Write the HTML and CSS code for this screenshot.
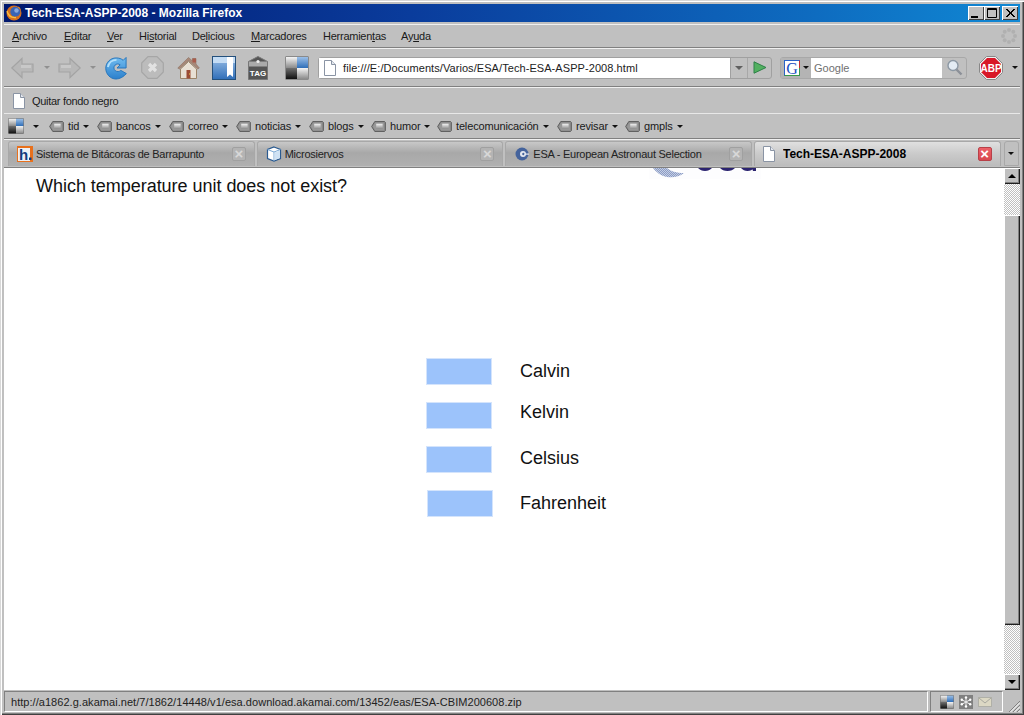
FILE: index.html
```html
<!DOCTYPE html>
<html lang="es">
<head>
<meta charset="utf-8">
<title>Tech-ESA-ASPP-2008 - Mozilla Firefox</title>
<link rel="stylesheet" href="styles.css">
</head>
<body>
<svg class="defs" width="0" height="0" aria-hidden="true">
  <defs>
    <linearGradient id="dg" x1="0" y1="0" x2="0" y2="1"><stop offset="0" stop-color="#f4f4f4"/><stop offset="1" stop-color="#8a8a8a"/></linearGradient>
    <linearGradient id="dk" x1="0" y1="0" x2="0" y2="1"><stop offset="0" stop-color="#707070"/><stop offset="1" stop-color="#101010"/></linearGradient>
    <linearGradient id="bl" x1="0" y1="0" x2="0" y2="1"><stop offset="0" stop-color="#9cc0e8"/><stop offset="1" stop-color="#2f6eb8"/></linearGradient>
    <linearGradient id="rl" x1="0" y1="0" x2="0" y2="1"><stop offset="0" stop-color="#70bcf0"/><stop offset="1" stop-color="#2c80cc"/></linearGradient>
    <linearGradient id="tag" x1="0" y1="0" x2="0" y2="1"><stop offset="0" stop-color="#f4f4f4"/><stop offset="1" stop-color="#8c8c8c"/></linearGradient>
    <symbol id="delicious" viewBox="0 0 24 24">
      <rect x="0.5" y="0.5" width="23" height="23" fill="#555"/>
      <rect x="1" y="1" width="11" height="11" fill="url(#dg)"/>
      <rect x="12" y="1" width="11" height="11" fill="url(#bl)"/>
      <rect x="1" y="12" width="11" height="11" fill="url(#dk)"/>
      <rect x="12" y="12" width="11" height="11" fill="url(#dg)"/>
    </symbol>
    <symbol id="page" viewBox="0 0 12 16">
      <path d="M.5.5h7l4 4v11H.5z" fill="#fff" stroke="#8a94a4"/>
      <path d="M7.5.5v4h4" fill="#e4e8ee" stroke="#8a94a4"/>
    </symbol>
    <symbol id="tagicon" viewBox="0 0 16 12">
      <path d="M4 .5h10.500l1 1v9l-1 1H4L.5 6z" fill="#8c8c8c" stroke="#585858"/>
      <path d="M4.500 2h9.500v8H4.500L2 6z" fill="#989898"/>
      <rect x="5.500" y="3" width="7" height="5.500" fill="url(#tag)"/>
    </symbol>
  </defs>
</svg>
<div class="window">
  <header class="titlebar">
    <svg class="t-icon" width="16" height="16" viewBox="0 0 16 16" aria-hidden="true">
      <circle cx="8" cy="8" r="7.500" fill="#d8701c"/>
      <circle cx="9.300" cy="6.800" r="5" fill="#3a64b4"/>
      <circle cx="10.500" cy="5.500" r="2.200" fill="#88a8dc"/>
      <path d="M1 6c1 4 4 7 9 6.500" fill="none" stroke="#f8c040" stroke-width="1.300"/>
      <path d="M12.500 1.500c1.500 1 2.300 2.500 2.500 4-1-1.500-2-2.500-3.500-3z" fill="#e88a24"/>
    </svg>
    <span class="t-text">Tech-ESA-ASPP-2008 - Mozilla Firefox</span>
    <div class="t-btns">
      <span class="t-btn"><svg width="16" height="14" viewBox="0 0 16 14" aria-hidden="true"><rect x="3" y="10" width="7" height="2" fill="#000"/></svg></span>
      <span class="t-btn"><svg width="16" height="14" viewBox="0 0 16 14" aria-hidden="true"><path d="M3.500 2.500h9v9h-9z M3 3.500h10" fill="none" stroke="#000"/></svg></span>
      <span class="t-btn t-close"><svg width="16" height="14" viewBox="0 0 16 14" aria-hidden="true"><path d="M4 3l8 8M5 3l8 8M12 3l-8 8M13 3l-8 8" stroke="#000"/></svg></span>
    </div>
  </header>

  <nav class="menubar">
    <span><u>A</u>rchivo</span>
    <span><u>E</u>ditar</span>
    <span><u>V</u>er</span>
    <span>Hi<u>s</u>torial</span>
    <span>De<u>l</u>icious</span>
    <span><u>M</u>arcadores</span>
    <span>Herramien<u>t</u>as</span>
    <span>Ay<u>u</u>da</span>
    <svg class="throbber" width="16" height="16" viewBox="0 0 16 16" aria-hidden="true">
      <g fill="#b0b0b0"><circle cx="8" cy="2" r="2"/><circle cx="8" cy="14" r="2"/><circle cx="2" cy="8" r="2"/><circle cx="14" cy="8" r="2"/><circle cx="3.700" cy="3.700" r="2"/><circle cx="12.300" cy="3.700" r="2"/><circle cx="3.700" cy="12.300" r="2"/><circle cx="12.300" cy="12.300" r="2"/></g>
    </svg>
  </nav>

  <div class="navbar">
    <svg class="i-back" width="23" height="22" viewBox="0 0 23 22" aria-hidden="true"><path d="M.8 11 11 1.500v5.500h11v8H11v5.500z" fill="#b8b8b8" stroke="#a4a4a4" stroke-width="1.200"/><path d="M10 11V8h10v3z" fill="#c8c8c8"/></svg>
    <span class="drop d-back"></span>
    <svg class="i-fwd" width="23" height="22" viewBox="0 0 23 22" aria-hidden="true"><path d="M22.200 11 12 1.500v5.500H1v8h11v5.500z" fill="#b8b8b8" stroke="#a4a4a4" stroke-width="1.200"/><path d="M13 11V8H3v3z" fill="#c8c8c8"/></svg>
    <span class="drop d-fwd"></span>
    <svg class="i-reload" width="23" height="24" viewBox="0 0 24 24" aria-hidden="true"><path d="M22 1v11h-9.500l3.300-3.300c-1.500-1.300-4-1.200-5.300.3-1.700 1.700-1.600 4.300.2 5.800 1.800 1.500 4.300 1.200 5.800-.3l5.800 3.300C19.600 21 15.600 23.500 11.500 23.500 5.500 23.500.8 18.300.8 12.300S5.600 1.500 11.600 1.500c3 0 5.500.8 7.400 2.500z" fill="url(#rl)" stroke="#2474bc"/><path d="M3 11c1-5 5-7.500 9-7.500" stroke="#b4e0fa" stroke-width="2" fill="none"/></svg>
    <svg class="i-stop" width="23" height="23" viewBox="0 0 23 23" aria-hidden="true"><path d="M7 .7h9l6.300 6.300v9L16 22.300H7L.7 16V7z" fill="#bcbcbc" stroke="#a6a6a6" stroke-width="1.200"/><path d="M8 8l7 7M15 8l-7 7" stroke="#e2e2e2" stroke-width="3.200"/></svg>
    <svg class="i-home" width="23" height="23" viewBox="0 0 23 23" aria-hidden="true"><path d="M.8 12 11.500 1.500l4 3.500V2.500h3.500V8l3.300 4-1.500 1-9.300-8.500L2.500 13z" fill="#a88878" stroke="#8c7060" stroke-width=".6"/><rect x="15.500" y="2.500" width="3.500" height="4" fill="#a85c4c"/><path d="M3.500 13 11.500 5.500l8 7.500v9.500h-16z" fill="#e8e0d4" stroke="#9c8468"/><rect x="9.500" y="14" width="4" height="8.500" fill="#9c4c34"/><rect x="12" y="17.500" width="1" height="1" fill="#f0d050"/></svg>
    <svg class="i-book" width="24" height="24" viewBox="0 0 24 24" aria-hidden="true"><rect x=".5" y=".5" width="23" height="23" fill="url(#bl)" stroke="#24507c"/><rect x="1" y="1" width="22" height="6" fill="#c4dcf4"/><path d="M15 1h6v20l-3-2.500-3 2.500z" fill="#fff"/></svg>
    <svg class="i-tag" width="20" height="24" viewBox="0 0 20 24" aria-hidden="true"><path d="M10 .5 19.500 5.500v18H.5v-18z" fill="#555" stroke="#777"/><rect x="1" y="5.500" width="18" height="5" fill="#aaa"/><circle cx="10" cy="5.500" r="1.600" fill="#eee"/><text x="10" y="19.500" text-anchor="middle" class="tagtxt">TAG</text></svg>
    <svg class="i-del" width="24" height="24" aria-hidden="true"><use href="#delicious"/></svg>
    <div class="urlbar">
      <div class="url-field">
        <svg width="12" height="16" aria-hidden="true"><use href="#page"/></svg>
        <span>file:///E:/Documents/Varios/ESA/Tech-ESA-ASPP-2008.html</span>
      </div>
      <span class="url-drop"><span class="drop drop-dark"></span></span>
      <span class="url-go"><svg width="14" height="13" viewBox="0 0 14 13" aria-hidden="true"><path d="M1 .8 13 6.500 1 12.200z" fill="#52b060" stroke="#2e8048"/></svg></span>
    </div>
    <div class="searchbar">
      <span class="se-engine">
        <svg width="16" height="16" viewBox="0 0 16 16" aria-hidden="true"><rect x=".5" y=".5" width="15" height="15" fill="#fff" stroke="#2a62c8"/><path d="M.5 15.500h15V8" fill="none" stroke="#3a9a48"/><path d="M15.500 8V.5" stroke="#c83030" fill="none"/><text x="8" y="13.500" text-anchor="middle" class="gtxt">G</text></svg>
        <span class="drop drop-black"></span>
      </span>
      <span class="se-field">Google</span>
      <span class="se-btn"><svg width="17" height="17" viewBox="0 0 17 17" aria-hidden="true"><circle cx="7" cy="6.500" r="5" fill="#e4ecf4" stroke="#8c98a4" stroke-width="1.400"/><path d="M10.500 10.500l5 5" stroke="#8c9098" stroke-width="2.400"/></svg></span>
    </div>
    <svg class="i-abp" width="24" height="24" viewBox="0 0 24 24" aria-hidden="true"><path d="M7.500.5h9l7 7v9l-7 7h-9l-7-7v-9z" fill="#f0f0f0" stroke="#888"/><path d="M8 2h8l6 6v8l-6 6H8l-6-6V8z" fill="#d81828"/><text x="12" y="16" text-anchor="middle" class="abptxt">ABP</text></svg>
    <span class="drop drop-black d-abp"></span>
  </div>

  <div class="bm1">
    <svg width="12" height="16" aria-hidden="true"><use href="#page"/></svg>
    <span>Quitar fondo negro</span>
  </div>

  <div class="bm2">
    <svg class="b-del" width="16" height="16" aria-hidden="true"><use href="#delicious"/></svg>
    <span class="drop drop-black"></span>
    <span class="folder"><svg width="15" height="11" aria-hidden="true"><use href="#tagicon"/></svg>tid<span class="drop drop-black"></span></span>
    <span class="folder"><svg width="15" height="11" aria-hidden="true"><use href="#tagicon"/></svg>bancos<span class="drop drop-black"></span></span>
    <span class="folder"><svg width="15" height="11" aria-hidden="true"><use href="#tagicon"/></svg>correo<span class="drop drop-black"></span></span>
    <span class="folder"><svg width="15" height="11" aria-hidden="true"><use href="#tagicon"/></svg>noticias<span class="drop drop-black"></span></span>
    <span class="folder"><svg width="15" height="11" aria-hidden="true"><use href="#tagicon"/></svg>blogs<span class="drop drop-black"></span></span>
    <span class="folder"><svg width="15" height="11" aria-hidden="true"><use href="#tagicon"/></svg>humor<span class="drop drop-black"></span></span>
    <span class="folder"><svg width="15" height="11" aria-hidden="true"><use href="#tagicon"/></svg>telecomunicación<span class="drop drop-black"></span></span>
    <span class="folder"><svg width="15" height="11" aria-hidden="true"><use href="#tagicon"/></svg>revisar<span class="drop drop-black"></span></span>
    <span class="folder"><svg width="15" height="11" aria-hidden="true"><use href="#tagicon"/></svg>gmpls<span class="drop drop-black"></span></span>
  </div>

  <div class="tabbar">
    <div class="tab">
      <svg width="16" height="16" viewBox="0 0 16 16" aria-hidden="true"><rect width="16" height="16" fill="#e8701c"/><rect x="1" y="2" width="12" height="13" fill="#eef0f4"/><text x="2" y="14" class="htxt">h</text><rect x="12" y="11.500" width="2.500" height="2.500" fill="#123a7c"/></svg>
      <span class="tab-label">Sistema de Bitácoras de Barrapunto</span>
      <span class="tab-x"></span>
    </div>
    <div class="tab">
      <svg width="16" height="16" viewBox="0 0 16 16" aria-hidden="true"><path d="M8 1l6.500 2.500v9L8 15l-6.500-2.500v-9z" fill="#fff" stroke="#2a5a90" stroke-width="1.200"/><path d="M1.500 3.500 8 6l6.500-2.500M8 6v9" fill="none" stroke="#7aa8d4"/><path d="M8.500 6.500 14 4.500v7.500l-5.500 2z" fill="#cfe2f4"/></svg>
      <span class="tab-label">Microsiervos</span>
      <span class="tab-x"></span>
    </div>
    <div class="tab">
      <svg width="16" height="16" viewBox="0 0 16 16" aria-hidden="true"><circle cx="8" cy="8" r="6.500" fill="#44639c"/><circle cx="9" cy="8" r="3" fill="#e4e8f0"/><circle cx="9.500" cy="8" r="1.300" fill="#44639c"/><rect x="10" y="7.500" width="5" height="1.200" fill="#e4e8f0"/></svg>
      <span class="tab-label">ESA - European Astronaut Selection</span>
      <span class="tab-x"></span>
    </div>
    <div class="tab tab-active">
      <svg width="12" height="16" aria-hidden="true"><use href="#page"/></svg>
      <span class="tab-label">Tech-ESA-ASPP-2008</span>
      <span class="tab-x tab-x-red"></span>
    </div>
    <span class="tab-list"><span class="drop drop-black"></span></span>
  </div>

  <div class="viewport">
    <main class="slide">
      <svg class="esa-logo" width="112" height="11" viewBox="0 0 112 11" aria-hidden="true">
        <defs><pattern id="hatch" width="2" height="2" patternUnits="userSpaceOnUse"><rect width="2" height="2" fill="#c4cee4"/><rect width="1" height="1" fill="#8c9cc4"/><rect x="1" y="1" width="1" height="1" fill="#8c9cc4"/></pattern></defs>
        <rect width="112" height="11" fill="#fdfdfe"/>
        <path d="M4 0H18C21 3 28 5 35 5C30 9 24 10 18 9C12 8 7 4 4 0z" fill="url(#hatch)"/>
        <path d="M49 0h14c-2 2-4 3-7 3s-5-1-7-3zM71 0h15c-2 2-4 3-7.500 3S73 2 71 0zM92 0h13c-2 2-3.500 3-6.500 3S94 2 92 0zM103 0h4v3h-3z" fill="#2c2470"/>
      </svg>
      <h1 class="question">Which temperature unit does not exist?</h1>
      <span class="opt-box b1"></span><span class="opt-label l1">Calvin</span>
      <span class="opt-box b2"></span><span class="opt-label l2">Kelvin</span>
      <span class="opt-box b3"></span><span class="opt-label l3">Celsius</span>
      <span class="opt-box b4"></span><span class="opt-label l4">Fahrenheit</span>
    </main>
    <aside class="scrollbar">
      <span class="sb-btn"><i class="up"></i></span>
      <span class="sb-track sb-t1"></span>
      <span class="sb-thumb"></span>
      <span class="sb-track sb-t2"></span>
      <span class="sb-btn"><i class="down"></i></span>
    </aside>
  </div>

  <footer class="statusbar">
    <div class="st-main">http://a1862.g.akamai.net/7/1862/14448/v1/esa.download.akamai.com/13452/eas/ESA-CBIM200608.zip</div>
    <div class="st-icons">
      <svg width="14" height="14" aria-hidden="true"><use href="#delicious"/></svg>
      <svg width="14" height="14" viewBox="0 0 14 14" aria-hidden="true"><rect width="14" height="14" fill="#808080"/><path d="M7 2v10M2.500 4.500l9 5M11.500 4.500l-9 5" stroke="#eee"/><g fill="#fff"><circle cx="7" cy="2.500" r="1.200"/><circle cx="7" cy="11.500" r="1.200"/><circle cx="2.800" cy="4.700" r="1.200"/><circle cx="11.200" cy="4.700" r="1.200"/><circle cx="2.800" cy="9.300" r="1.200"/><circle cx="11.200" cy="9.300" r="1.200"/></g></svg>
      <svg width="14" height="10" viewBox="0 0 14 10" aria-hidden="true"><rect x=".5" y=".5" width="13" height="9" fill="#dcd8c4" stroke="#b0b0a8"/><path d="M1 1l6 5 6-5" fill="none" stroke="#a8a8a0"/></svg>
    </div>
    <svg class="grip" width="12" height="12" viewBox="0 0 12 12" aria-hidden="true"><path d="M12 1 1 12M12 5 5 12M12 9l-3 3" stroke="#808080" stroke-width="1"/><path d="M12 2.500 2.500 12M12 6.500 6.500 12M12 10.500 10.500 12" stroke="#fff" stroke-width="1"/></svg>
  </footer>
</div>
</body>
</html>
```
FILE: styles.css
```css
* { box-sizing: border-box; }
html, body { margin: 0; padding: 0; }
body { width: 1024px; height: 715px; overflow: hidden; background: #c0c0c0; font-family: "Liberation Sans", Arial, sans-serif; font-size: 11px; color: #1a1a1a; }
.defs { position: absolute; }
svg { display: block; flex: none; }
.window {
  width: 1024px; height: 715px; padding: 4px 4px 3px; background: #c0c0c0;
  display: flex; flex-direction: column;
  box-shadow: inset 1px 1px 0 #d8d8d8, inset 2px 2px 0 #fff, inset -1px -1px 0 #404040, inset -2px -2px 0 #808080;
}
.titlebar {
  height: 18px; flex: none; display: flex; align-items: center; padding: 0 2px;
  background: linear-gradient(90deg, #00186e 0%, #0a3c9c 40%, #0e6cc0 80%, #1088d4 100%);
  color: #fff; font-weight: bold; font-size: 12px;
}
.t-icon { margin-right: 3px; }
.t-btns { margin-left: auto; display: flex; }
.t-btn { width: 16px; height: 14px; background: #c0c0c0; box-shadow: inset 1px 1px 0 #fff, inset -1px -1px 0 #404040; display: block; }
.t-close { margin-left: 2px; }
.menubar {
  height: 24px; margin-top: 2px; flex: none; display: grid; align-items: center; padding-left: 8px; letter-spacing: -0.25px;
  grid-template-columns: 52px 43px 32px 53px 59px 72px 78px 1fr 16px;
  border-top: 1px solid #f0f0f0; border-bottom: 1px solid #808080;
}
.menubar u { text-underline-offset: 1px; }
.throbber { margin-left: -3px; }
.navbar {
  height: 39px; flex: none; display: flex; align-items: center; padding-left: 7px;
  border-top: 1px solid #f0f0f0; border-bottom: 1px solid #808080;
}
.drop { display: inline-block; width: 0; height: 0; border: 3px solid transparent; border-top: 3px solid #909090; border-bottom: 0; flex: none; }
.drop-dark { border-top-color: #606060; border-left-width: 4px; border-right-width: 4px; border-top-width: 4px; }
.drop-black { border-top-color: #111; }
.d-back { margin: 0 8px 0 10px; }
.d-fwd { margin: 0 9px 0 9px; }
.i-reload { margin-right: 13px; }
.i-stop { margin-right: 13px; }
.i-home { margin-right: 12px; }
.i-book { margin-right: 12px; }
.i-tag { margin-right: 17px; }
.i-del { margin-right: 9px; }
.tagtxt { font: bold 8px "Liberation Sans", sans-serif; fill: #fff; }
.gtxt { font: 16px "Liberation Serif", serif; fill: #2050c0; }
.abptxt { font: bold 10px "Liberation Sans", sans-serif; fill: #fff; }
.htxt { font: bold 15px "Liberation Sans", sans-serif; fill: #123a7c; }
.urlbar {
  width: 454px; height: 22px; flex: none; display: flex; border: 1px solid #a0a0a0; border-radius: 3px; background: #c0c0c0; margin-right: 8px;
}
.url-field { width: 411px; background: #fff; display: flex; align-items: center; gap: 7px; padding-left: 5px; color: #222; letter-spacing: 0.07px; }
.url-drop { width: 17px; display: flex; align-items: center; justify-content: center; border-left: 1px solid #a0a0a0; }
.url-go { flex: 1; display: flex; align-items: center; justify-content: center; border-left: 1px solid #a8a8a8; }
.searchbar {
  width: 187px; height: 22px; flex: none; display: flex; border: 1px solid #a8a8a8; border-radius: 3px; margin-right: 12px;
}
.se-engine { width: 30px; display: flex; align-items: center; gap: 3px; padding-left: 3px; background: #b4b4b4; }
.se-field { width: 131px; background: #fff; color: #707070; font-size: 11px; display: flex; align-items: center; padding-left: 3px; }
.se-btn { flex: 1; display: flex; align-items: center; justify-content: center; }
.d-abp { margin-left: 9px; }
.bm1 {
  height: 27px; flex: none; display: flex; align-items: center; gap: 7px; padding-left: 9px; letter-spacing: -0.3px;
  border-top: 1px solid #f0f0f0; border-bottom: 1px solid #e8e8e8;
}
.bm2 {
  height: 25px; flex: none; display: grid; align-items: center; padding-left: 4px; border-bottom: 1px solid #808080; letter-spacing: -0.15px;
  grid-template-columns: 25px 16px 48px 72px 67px 73px 62px 66px 120px 68px auto;
}
.folder { display: flex; align-items: center; gap: 4px; }
.tabbar {
  height: 29px; flex: none; display: flex; align-items: flex-end; padding: 0 0 1px 4px; gap: 2px;
  border-bottom: 1px solid #808080; border-top: 1px solid #f0f0f0;
}
.tab {
  width: 246.67px; height: 25px; display: flex; align-items: center; gap: 3px; padding: 0 8px 0 8px; letter-spacing: -0.25px;
  border: 1px solid #a8a8a8; border-bottom: 0; border-radius: 3px 3px 0 0;
  background: linear-gradient(#c8c8c8, #a8a8a8 45%, #b0b0b0);
  color: #222;
}
.tab-active { background: linear-gradient(#e0e0e0, #cacaca 50%, #bcbcbc); color: #000; font-weight: bold; font-size: 12px; letter-spacing: 0; gap: 8px; padding-left: 8px; }
.tab-label { flex: 1; white-space: nowrap; overflow: hidden; }
.tab-x { width: 14px; height: 14px; flex: none; border-radius: 2px; background: #b4b4b4; border: 1px solid #a0a0a0; position: relative; }
.tab-x::before { content: "\00d7"; position: absolute; left: 0; right: 0; top: -3px; text-align: center; font: bold 15px/17px "Liberation Sans", sans-serif; color: #d8d8d8; }
.tab-x-red { background: linear-gradient(#ec6068, #d84850); border-color: #b84048; }
.tab-x-red::before { color: #fff; }
.tab-list { width: 15px; height: 25px; margin-left: 1px; display: flex; align-items: center; justify-content: center; border: 1px solid #a8a8a8; border-radius: 3px 3px 0 0; }
.viewport { flex: 1; display: flex; background: #fff; min-height: 0; box-shadow: inset 1px 0 0 #808080; }
.slide { flex: 1; position: relative; overflow: hidden; background: #fff; }
.esa-logo { position: absolute; left: 645px; top: 0; }
.question { position: absolute; left: 32px; top: 7px; margin: 0; font-weight: normal; font-size: 18px; line-height: 22px; color: #111; white-space: nowrap; letter-spacing: -0.03px; }
.opt-box { position: absolute; width: 66px; height: 27px; background: #9cc3fb; box-shadow: 0 0 0 1px #d4e4fc inset; }
.opt-label { position: absolute; left: 516px; font-size: 18px; line-height: 22px; color: #111; }
.b1 { left: 422px; top: 190px; } .b2 { left: 422px; top: 234px; } .b3 { left: 422px; top: 278px; } .b4 { left: 423px; top: 322px; }
.l1 { top: 192px; } .l2 { top: 233px; } .l3 { top: 279px; } .l4 { top: 324px; }
.scrollbar { width: 16px; flex: none; display: flex; flex-direction: column; }
.sb-btn { height: 16px; flex: none; background: #c0c0c0; box-shadow: inset 1px 1px 0 #fff, inset -1px -1px 0 #202020, inset -2px -2px 0 #808080; display: flex; align-items: center; justify-content: center; }
.sb-btn i { display: block; width: 0; height: 0; border: 4px solid transparent; }
.sb-btn .up { border-top: 0; border-bottom-color: #000; }
.sb-btn .down { border-bottom: 0; border-top-color: #000; }
.sb-track { background: repeating-conic-gradient(#c0c0c0 0 25%, #fff 0 50%) 0 0 / 2px 2px; }
.sb-t1 { height: 31px; flex: none; }
.sb-thumb { height: 410px; flex: none; background: #c0c0c0; box-shadow: inset 1px 1px 0 #fff, inset -1px -1px 0 #202020, inset -2px -2px 0 #808080; }
.sb-t2 { flex: 1; }
.statusbar { height: 22px; flex: none; display: flex; align-items: stretch; padding-top: 1px; position: relative; }
.st-main { width: 924px; border: 1px solid; border-color: #808080 #fff #fff #808080; padding-left: 6px; display: flex; align-items: center; color: #222; letter-spacing: 0.04px; }
.st-icons { width: 73px; margin-left: 2px; border: 1px solid; border-color: #808080 #fff #fff #808080; display: flex; align-items: center; gap: 5px; padding-left: 9px; }
.grip { position: absolute; right: 0; bottom: 0; }
```
